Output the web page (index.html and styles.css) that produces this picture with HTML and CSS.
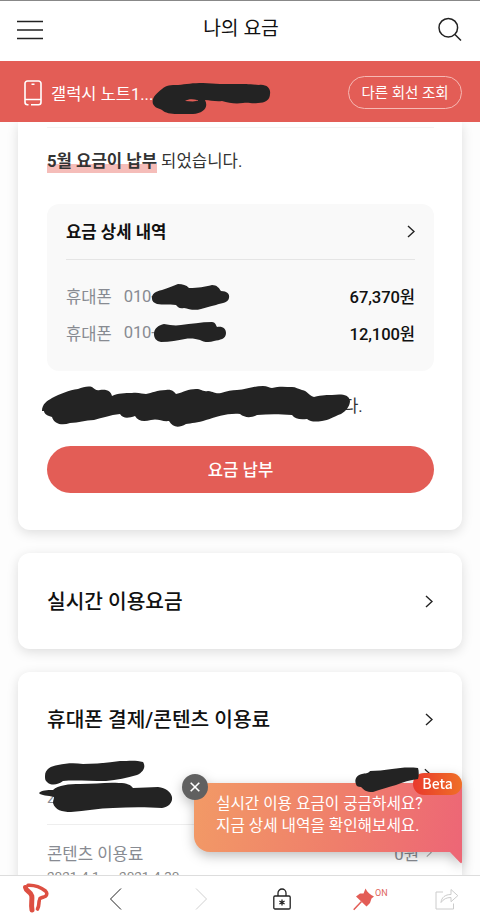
FILE: index.html
```
<!DOCTYPE html>
<html lang="ko">
<head>
<meta charset="utf-8">
<title>나의 요금</title>
<link rel="stylesheet" href="styles.css">
</head>
<body>
<div class="app">
  <header class="topbar">
    <svg class="menu" width="26" height="20" viewBox="0 0 26 20"><path d="M0 1.500h26M0 10h26M0 18.500h26"/></svg>
    <h1>나의 요금</h1>
    <svg class="search" width="24" height="25" viewBox="0 0 24 25"><circle cx="10.300" cy="10.700" r="9.300"/><path d="M17 17.500l6 6"/></svg>
  </header>
  <div class="line-bar">
    <svg class="phone" width="18" height="26" viewBox="0 0 18 26"><path d="M4.500 24.700H3.500a2.500 2.500 0 0 1-2.500-2.500V3.500A2.500 2.500 0 0 1 3.500 1h11A2.500 2.500 0 0 1 17 3.500v18.700a2.500 2.500 0 0 1-2.500 2.500H7M1 19.500h16M7.500 4.300h3"/></svg>
    <span class="device">갤럭시 노트1...</span>
    <button class="switch">다른 회선 조회</button>
  </div>
  <main>
    <section class="card bill">
      <hr>
      <p class="status"><strong>5월 요금이 납부</strong> 되었습니다.</p>
      <div class="detail">
        <div class="detail-head"><h3>요금 상세 내역</h3><svg class="chev" width="8" height="13" viewBox="0 0 8 13"><path d="M1 1l6 5.500-6 5.500"/></svg></div>
        <div class="fee"><span>휴대폰</span><span class="num">010-</span><b>67,370원</b></div>
        <div class="fee"><span>휴대폰</span><span class="num">010-</span><b>12,100원</b></div>
      </div>
      <p class="note">다.</p>
      <button class="pay">요금 납부</button>
    </section>
    <section class="card link">
      <h2>실시간 이용요금</h2><svg class="chev" width="8" height="13" viewBox="0 0 8 13"><path d="M1 1l6 5.500-6 5.500"/></svg>
    </section>
    <section class="card usage">
      <div class="usage-head"><h2>휴대폰 결제/콘텐츠 이용료</h2><svg class="chev" width="8" height="13" viewBox="0 0 8 13"><path d="M1 1l6 5.500-6 5.500"/></svg></div>
      <div class="masked"><span>2</span><svg class="chev" width="7" height="12" viewBox="0 0 8 13"><path d="M1 1l6 5.500-6 5.500"/></svg></div>
      <div class="content-fee"><span>콘텐츠 이용료</span><span class="zero">0원</span><svg class="chev" width="6" height="11" viewBox="0 0 8 13"><path d="M1 1l6 5.500-6 5.500"/></svg></div>
      <div class="period">2021.4.1. ~ 2021.4.30.</div>
    </section>
  </main>
  <nav>
    <svg class="logo" width="27" height="30" viewBox="0 0 27 30"><path class="wing" d="M6 2.300C12 2 19 4.500 23.500 8c1.800 1.700 1.700 4 0 5.200-1.700 1-4 1.200-5.500 2.300"/><path class="stem" d="M3.500 4.500C4 8.500 9 8.500 9.800 13c.6 4-1 8 .2 14"/><path class="foot" d="M17.300 17.500c-.8 2.500.2 5-1.800 8.500"/></svg>
    <svg class="back" width="13" height="22" viewBox="0 0 13 22"><path d="M12 .5L1.500 11 12 21.500"/></svg>
    <svg class="forward" width="13" height="22" viewBox="0 0 13 22"><path d="M1 .5L11.500 11 1 21.500"/></svg>
    <svg class="lock" width="18" height="22" viewBox="0 0 18 22"><rect x=".8" y="8" width="16.400" height="13" rx="1.200"/><path d="M5 8V5a4 4 0 0 1 8 0v3M9 11.500v6M6.400 13l5.200 3M11.600 13l-5.200 3"/></svg>
    <div class="pin"><svg width="22" height="23" viewBox="0 0 22 23"><path class="head" d="M12.500.5c2 4 4.500 6 8.500 8l-2.500 2-1.500 4.500-3.500 3.500L3 8.500l4-3h3.500z"/><path class="needle" d="M8.500 13.500L.7 21.800"/></svg><span>ON</span></div>
    <svg class="share" width="24" height="22" viewBox="0 0 24 22"><path d="M8 4H1v17h17.500v-5.500M6 14.500c.5-5 4-8 10-8V1.500l6.800 6.200-6.800 6v-4.200c-4.500 0-7.500 1.500-10 5z"/></svg>
  </nav>

  <aside class="bubble">
    <svg class="tail" width="13" height="13" viewBox="0 0 13 13"><path d="M0 0h13v10.500c0 2-1 2-2 1z"/></svg>
    <p>실시간 이용 요금이 궁금하세요?<br>지금 상세 내역을 확인해보세요.</p>
    <span class="beta">Beta</span>
    <button class="close"><svg width="10" height="10" viewBox="0 0 10 10"><path d="M.7.700l8.600 8.600M9.300.700L.7 9.300"/></svg></button>
  </aside>

  <svg class="ink" width="480" height="920" viewBox="0 0 480 920">
    <path fill-rule="evenodd" d="M153 104c-2-6 4-11 9-15 4-4 9-4 16-4 8-1 15-2 25-2 12 1 22 1 34 1 8 0 12 0 22 1 8-1 12 4 11 9 0 6-5 9-12 9-7 1-9-1-15 0-8 1-14 0-21-2-6 1-12-1-17-1 4 8-2 13-12 14h-16c-6 0-12-1-15-4-4-2-7-2-9-6zM185 101c4 0 8 1 11 0 2 0 3-1 1-1-4-1-9-1-12 1z"/>
    <path d="M152 299c-1-5 4-8 10-9 6-2 11-4 16-6 5 0 8 1 11 4 10 0 15-1 23-3 5 0 7 3 9 6 6 0 9 3 8 7-1 5-8 5-13 7-6 1-10 3-15 4-7 2-12 0-17-1-5 1-6-1-8-3-8-1-13 0-19-1-3-1-5-3-5-5z"/>
    <path d="M154 334c0-6 5-9 10-10 6 1 11 2 17 1 10-1 20-3 31-3 3 0 4 3 5 5 6-1 9 2 9 6 0 6-6 7-12 8-5 2-11 1-14-1-4-1-9-2-15-1-7 1-15 3-24 3-5-1-7-4-7-8z"/>
    <path d="M42 411c0-7 5-10 10-13 8-4 17-8 26-9 5-2 10-3 14-2 3 2 4 4 8 3 8-1 11 2 12 6 6-3 13-3 20-3 6-1 11 1 14 1 6-1 11-4 20-4 6-1 8 2 10 4 8-2 12-5 20-5 6 0 6 3 12 2 7 1 7 3 13 2 6-2 11-3 16-3 9 0 16-4 26-4 4 0 7 2 9 2 7-2 14-1 20-1 4 0 6 2 10 3 6 1 6 5 12 7 8-2 14-2 18-2 9-1 17-1 18 6 0 5-4 10-9 13-8 3-12 6-19 7-7 1-11 1-15-2-7 1-12 0-15-4-13-1-23-1-35 0-6 3-12 3-17-1-13-1-23 3-34 6-8 3-15 3-20 4-7 4-13 4-17-3-7 1-11-3-18-1-8 2-13 1-16-4-6 2-12 3-15-2-10 1-18 4-26 6-9 0-15 3-24 3-8 3-16 1-18-6-4-1-8-3-8-6z"/>
    <path d="M45 776c0-7 6-10 13-11 9-2 17-2 25-1 11 0 24-1 37-3 9 0 16-1 23 1 3 4 1 10-6 13-10 3-20 5-31 6-18 0-32-1-43 0-5 4-12 5-16 1-2-2-2-3-2-6z"/>
    <path d="M39 793c3-3 8-3 14-3 5-5 16-6 27-6 15 0 27-2 39-1 8 0 12 2 14 5 9 0 17-1 25-1 8 1 13 5 14 10 1 6-4 10-10 11-15-1-32-1-49 0-14 0-28 3-42 4-9 0-16-2-18-9 0-3 1-4 1-6-6-2-13-1-15-4z"/>
    <path d="M356 784c-2-5 1-9 6-10 3-1 6 0 8-3 7 0 14-1 22-2 8-1 15-2 26-1 1 3 1 8 0 11-8 1-15 3-22 6-7 2-15 4-23 7-7 0-9-2-12-5-3 0-5-1-5-3z"/>
  </svg>
</div>
</body>
</html>
```
FILE: styles.css
```
* { box-sizing: border-box; }
body { margin: 0; font-family: Roboto, "Noto Sans CJK KR", sans-serif; color: #111; background: #fff; }
h1, h2, h3, p { margin: 0; font-weight: 500; white-space: nowrap; }
button { font-family: inherit; padding: 0; border: 0; color: #fff; white-space: nowrap; }
svg { display: block; flex: none; fill: none; stroke: #222; }
.app { position: relative; width: 480px; height: 920px; overflow: hidden; display: flex; flex-direction: column; }
.topbar { height: 61px; flex: none; border-top: 1px solid #888; display: flex; align-items: center; justify-content: space-between; padding: 0 18px 4px 17px; }
.topbar h1 { font-size: 19.300px; font-weight: 400; line-height: 28px; margin-left: 1px; }
.menu, .search { stroke-width: 1.500; }
.menu { margin-top: 1px; }
.line-bar { height: 61px; flex: none; background: #e35d56; color: #fff; display: flex; align-items: center; padding: 2px 18px 0 24px; }
.phone { stroke: #fff; stroke-width: 1.600; }
.device { margin-left: 9px; font-size: 16.500px; white-space: nowrap; }
.switch { margin-left: auto; width: 114px; height: 33px; border: 1px solid #f6b9b4; border-radius: 17px; background: none; font-size: 14.500px; padding-bottom: 2px; }
main { flex: 1; min-height: 0; overflow: hidden; padding: 0 18px; display: flex; flex-direction: column; gap: 23px; background: #fdfdfd; }
.card { flex: none; background: #fff; border-radius: 12px; box-shadow: 0 3px 12px rgba(0, 0, 0, .13); padding: 0 29px; }
.bill { height: 408px; border-radius: 0 0 12px 12px; padding: 5px 28px 0 29px; }
hr { border: 0; height: 1px; margin: 0; background: #f3f3f3; }
.status { margin-top: 21px; font-size: 16.700px; font-weight: 400; line-height: 25px; color: #333; }
.status strong { font-weight: 700; padding-bottom: 2px; background: linear-gradient(transparent 0 12px, #f5bdb9 12px); }
.detail { margin-top: 30px; height: 167px; border-radius: 12px; background: #f9f9f9; padding: 0 19px; }
.detail-head { height: 56px; display: flex; align-items: center; justify-content: space-between; border-bottom: 1px solid #e5e5e5; margin-bottom: 18px; }
.detail h3 { font-size: 16.700px; font-weight: 700; padding-bottom: 2px; }
.chev { stroke-width: 1.400; }
.fee { height: 36.500px; display: flex; align-items: center; font-size: 16.600px; color: #888b92; }
.fee .num { margin-left: 12px; font-weight: 400; letter-spacing: -.2px; }
.fee b { margin-left: auto; font-weight: 500; color: #111; letter-spacing: -.1px; }
.note { margin-top: 23px; padding-left: 296px; font-size: 16.700px; font-weight: 400; line-height: 26px; color: #333; }
.pay { display: block; width: 100%; margin-top: 26px; height: 47px; border-radius: 24px; background: #e35d56; font-size: 16.700px; font-weight: 500; padding-bottom: 2px; }
.link { height: 96px; display: flex; align-items: center; justify-content: space-between; }
h2 { font-size: 20.300px; padding-bottom: 3px; }
.usage { height: 260px; }
.usage-head { height: 95px; display: flex; align-items: center; justify-content: space-between; }
.masked { height: 58px; border-bottom: 1px solid #eee; display: flex; justify-content: space-between; align-items: flex-start; color: #888b92; font-size: 14px; }
.masked span { margin-top: 23px; }
.masked .chev { margin: 1px 2px 0; }
.content-fee { display: flex; align-items: center; margin-top: 15px; height: 25px; font-size: 16.700px; color: #888b92; }
.zero { margin-left: auto; margin-right: 7px; }
.content-fee .chev { margin-right: 1px; stroke: #aaa; }
.period { font-size: 13.500px; line-height: 20px; color: #888; white-space: nowrap; margin-top: 1px; }
nav { position: relative; z-index: 2; height: 45px; flex: none; background: #fff; border-top: 1px solid #ddd; display: flex; align-items: center; padding: 2px 22px 0 22px; }
.logo { stroke: #dd4f42; stroke-linecap: round; stroke-linejoin: round; margin-top: -3px; }
.logo .wing { stroke-width: 3.600; }
.logo .stem { stroke-width: 5; }
.logo .foot { stroke-width: 3.600; }
.back { margin-left: 60px; }
.forward { margin-left: 73px; stroke: #d0d0d0; }
.lock { margin-left: 65px; stroke-width: 1.300; }
.pin { margin-left: 62px; display: flex; align-items: flex-start; color: #e0665c; font-size: 9px; line-height: 11px; }
.pin .head { fill: #e35d56; stroke: none; }
.pin .needle { stroke: #e35d56; stroke-width: 1.500; }
.share { margin-left: auto; margin-right: -1px; stroke: #ccc; }
.bubble { position: absolute; left: 194px; top: 783px; width: 268px; height: 69px; border-radius: 16px 4px 0 16px; background: linear-gradient(100deg, #f29a66, #ef7e6b 55%, #ed6676); filter: drop-shadow(0 4px 6px rgba(0, 0, 0, .25)); color: #fff; }
.bubble p { padding: 10px 0 0 22px; font-size: 15.700px; font-weight: 400; line-height: 22px; }
.tail { position: absolute; right: 0; top: 68px; fill: #ed6875; stroke: none; }
.beta { position: absolute; left: 219px; top: -10px; width: 49px; height: 22px; border-radius: 11px; background: linear-gradient(90deg, #e9392c, #ef7027); font: 500 14px/21px "Noto Sans CJK KR", sans-serif; text-align: center; }
.close { position: absolute; left: -12px; top: -9px; width: 26px; height: 26px; border-radius: 50%; background: #606060; display: flex; align-items: center; justify-content: center; }
.close svg { stroke: #fff; stroke-width: 1.600; }
.ink { position: absolute; left: 0; top: 0; fill: #232323; stroke: none; pointer-events: none; }
```
